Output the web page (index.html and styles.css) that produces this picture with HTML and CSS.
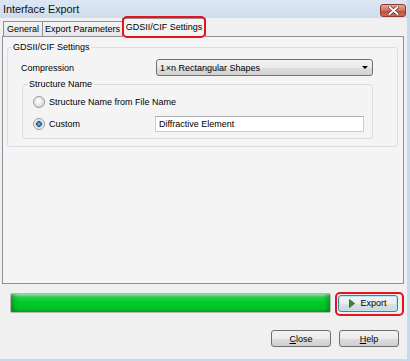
FILE: index.html
```html
<!DOCTYPE html>
<html>
<head>
<link rel="stylesheet" href="styles.css">
</head>
<body>

<div class="window">
  <div class="titlebar">
    <span class="title">Interface Export</span>
    <div class="close-btn">
      <svg width="11" height="9" viewBox="0 0 11 9">
        <path d="M1.5 1 L9.5 8 M9.5 1 L1.5 8" stroke="#5a2a24" stroke-width="3.4" stroke-linecap="round"/>
        <path d="M1.5 1 L9.5 8 M9.5 1 L1.5 8" stroke="#ffffff" stroke-width="2" stroke-linecap="round"/>
      </svg>
    </div>
  </div>

  <div class="content">
    <div class="tabs">
      <div class="tab tab-general">General</div>
      <div class="tab tab-params">Export Parameters</div>
      <div class="tab tab-active">GDSII/CIF Settings</div>
    </div>

    <div class="tab-page">
      <div class="group">
        <div class="group-title">GDSII/CIF Settings</div>

        <div class="comp-row">
          <span class="comp-label">Compression</span>
          <div class="combo">
            <span>1&#8202;×n Rectangular Shapes</span>
            <span class="arrow"></span>
          </div>
        </div>

        <div class="subgroup">
          <div class="group-title">Structure Name</div>

          <div class="radio-row first">
            <span class="radio"></span>
            <span>Structure Name from File Name</span>
          </div>

          <div class="radio-row second">
            <div class="radio-cell">
              <span class="radio checked"></span>
              <span>Custom</span>
            </div>
            <div class="textbox">Diffractive Element</div>
          </div>
        </div>
      </div>
    </div>

    <div class="export-row">
      <div class="progress"></div>
      <div class="btn btn-export">
        <svg width="6" height="9" viewBox="0 0 6 9">
          <path d="M0.5 0.5 L5.5 4.5 L0.5 8.5 Z" fill="#2f8f2f" stroke="#1f6a1f" stroke-width="0.8"/>
        </svg>
        <span>Export</span>
      </div>
    </div>

    <div class="footer-row">
      <div class="btn"><u>C</u>lose</div>
      <div class="btn"><u>H</u>elp</div>
    </div>
  </div>
</div>

</body>
</html>
```

FILE: styles.css
```css
body {
  margin: 0;
  font-family: "Liberation Sans", Arial, sans-serif;
  font-size: 9px;
  color: #000;
  background: #f0f0f0;
}

.window {
  width: 410px;
  height: 361px;
  box-sizing: border-box;
  border-right: 3px solid #c6d9ee;
  border-bottom: 2px solid #c6d9ee;
  background: #f0f0f0;
  overflow: hidden;
}

.titlebar {
  height: 18px;
  display: flex;
  align-items: flex-start;
  justify-content: space-between;
  padding: 0 1px 0 3px;
  background: linear-gradient(#dce7f3, #cddded);
}

.title {
  font-size: 10.8px;
  line-height: 19px;
  color: #111;
}

.close-btn {
  margin-top: 4px;
  width: 26px;
  height: 13px;
  box-sizing: border-box;
  border: 1px solid #8d3b31;
  border-radius: 3px;
  background: linear-gradient(#e9a89a, #d2705f 50%, #c4473a 51%, #d26a55);
  display: flex;
  align-items: center;
  justify-content: center;
}

.content {
  padding-left: 2px;
}

.tabs {
  height: 18px;
  display: flex;
  align-items: flex-end;
  padding-left: 1px;
}

.tab {
  box-sizing: border-box;
  height: 15px;
  border: 1px solid #8e9199;
  border-bottom: none;
  background: linear-gradient(#f3f3f3, #e6e6e6);
  text-align: center;
  line-height: 14px;
  white-space: nowrap;
}

.tab-general {
  width: 40px;
}

.tab-params {
  width: 81px;
  margin-left: -1px;
}

.tab-active {
  position: relative;
  z-index: 1;
  width: 84px;
  height: 19px;
  margin-left: -1px;
  margin-bottom: -1px;
  background: #f4f4f4;
  line-height: 17px;
}

.tab-active::after {
  content: "";
  position: absolute;
  top: -3px;
  left: -1px;
  right: -1px;
  bottom: -1px;
  border: 2.5px solid #e5141c;
  border-radius: 5px;
}

.tab-page {
  width: 402px;
  height: 248px;
  box-sizing: border-box;
  border: 1px solid #8e9199;
  background: #f4f4f4;
  padding-top: 10px;
}

.group {
  margin-left: 4px;
  width: 391px;
  box-sizing: border-box;
  border: 1px solid #d6dfe6;
  border-radius: 3px;
  padding-bottom: 7px;
}

.group-title {
  width: fit-content;
  margin: -7px 0 0 4px;
  padding: 0 1px;
  line-height: 13px;
  background: #f4f4f4;
}

.comp-row {
  margin-top: 5px;
  height: 17px;
  display: flex;
  align-items: center;
  padding-left: 13px;
}

.comp-label {
  width: 135px;
}

.combo {
  width: 217px;
  height: 17px;
  box-sizing: border-box;
  border: 1px solid #707070;
  border-radius: 3px;
  background: linear-gradient(#f3f3f3, #ebebeb 50%, #dedede 51%, #d2d2d2);
  display: flex;
  align-items: center;
  justify-content: space-between;
  padding: 0 4px 0 3px;
}

.arrow {
  width: 0;
  height: 0;
  border-left: 3px solid transparent;
  border-right: 3px solid transparent;
  border-top: 3px solid #000;
}

.subgroup {
  margin: 8px 0 0 14px;
  width: 351px;
  box-sizing: border-box;
  border: 1px solid #d6dfe6;
  border-radius: 3px;
  padding-bottom: 6px;
}

.subgroup .group-title {
  margin-left: 5px;
}

.radio-row {
  display: flex;
  align-items: center;
  padding-left: 10px;
}

.radio-row.first {
  margin-top: 3px;
  height: 15px;
  gap: 4px;
}

.radio-row.second {
  margin-top: 7px;
  height: 16px;
}

.radio-cell {
  width: 122px;
  display: flex;
  align-items: center;
  gap: 4px;
}

.radio {
  width: 12px;
  height: 12px;
  box-sizing: border-box;
  border-radius: 50%;
  border: 1px solid #9a9a9a;
  background: radial-gradient(circle at 45% 40%, #ffffff, #e4e4e4 55%, #c9c9c9);
}

.radio.checked {
  background: radial-gradient(circle, #8fd6f8 0, #2a7fc0 1.5px, #154f86 2.5px, #c8c8c8 3px, #e6e6e6 4px, #f6f6f6 5px);
}

.textbox {
  width: 209px;
  height: 16px;
  box-sizing: border-box;
  border: 1px solid #c9ccd3;
  border-top-color: #abadb3;
  background: #fff;
  padding-left: 3px;
  line-height: 14px;
}

.export-row {
  margin-top: 9px;
  display: flex;
  align-items: center;
  padding-left: 8px;
}

.progress {
  width: 321px;
  height: 20px;
  box-sizing: border-box;
  border: 1px solid #b5b5b5;
  border-radius: 2px;
  background: linear-gradient(#a9eab5, #2ccf4a 3px, #00cc2a 8px, #00c225 80%, #05a822);
  box-shadow: inset 6px 0 5px -3px rgba(0, 90, 20, 0.45), inset -6px 0 5px -3px rgba(0, 90, 20, 0.45);
}

.btn {
  width: 60px;
  height: 17px;
  box-sizing: border-box;
  border: 1px solid #707070;
  border-radius: 3px;
  background: linear-gradient(#f2f2f2, #ebebeb 50%, #dddddd 51%, #cfcfcf);
  display: flex;
  align-items: center;
  justify-content: center;
}

.btn-export {
  position: relative;
  margin-left: 7px;
  gap: 5px;
  border-color: #3c7fb1;
  box-shadow: inset 0 0 0 1px #bfe4f7;
  background: linear-gradient(#f0f4f6, #e9eef1 50%, #dbe2e6 51%, #ced6da);
}

.btn-export::after {
  content: "";
  position: absolute;
  top: -4px;
  left: -4px;
  right: -7px;
  bottom: -5px;
  border: 2.5px solid #e5141c;
  border-radius: 5px;
}

.footer-row {
  margin-top: 17px;
  display: flex;
  justify-content: flex-end;
  gap: 8px;
  padding-right: 8px;
}
```
